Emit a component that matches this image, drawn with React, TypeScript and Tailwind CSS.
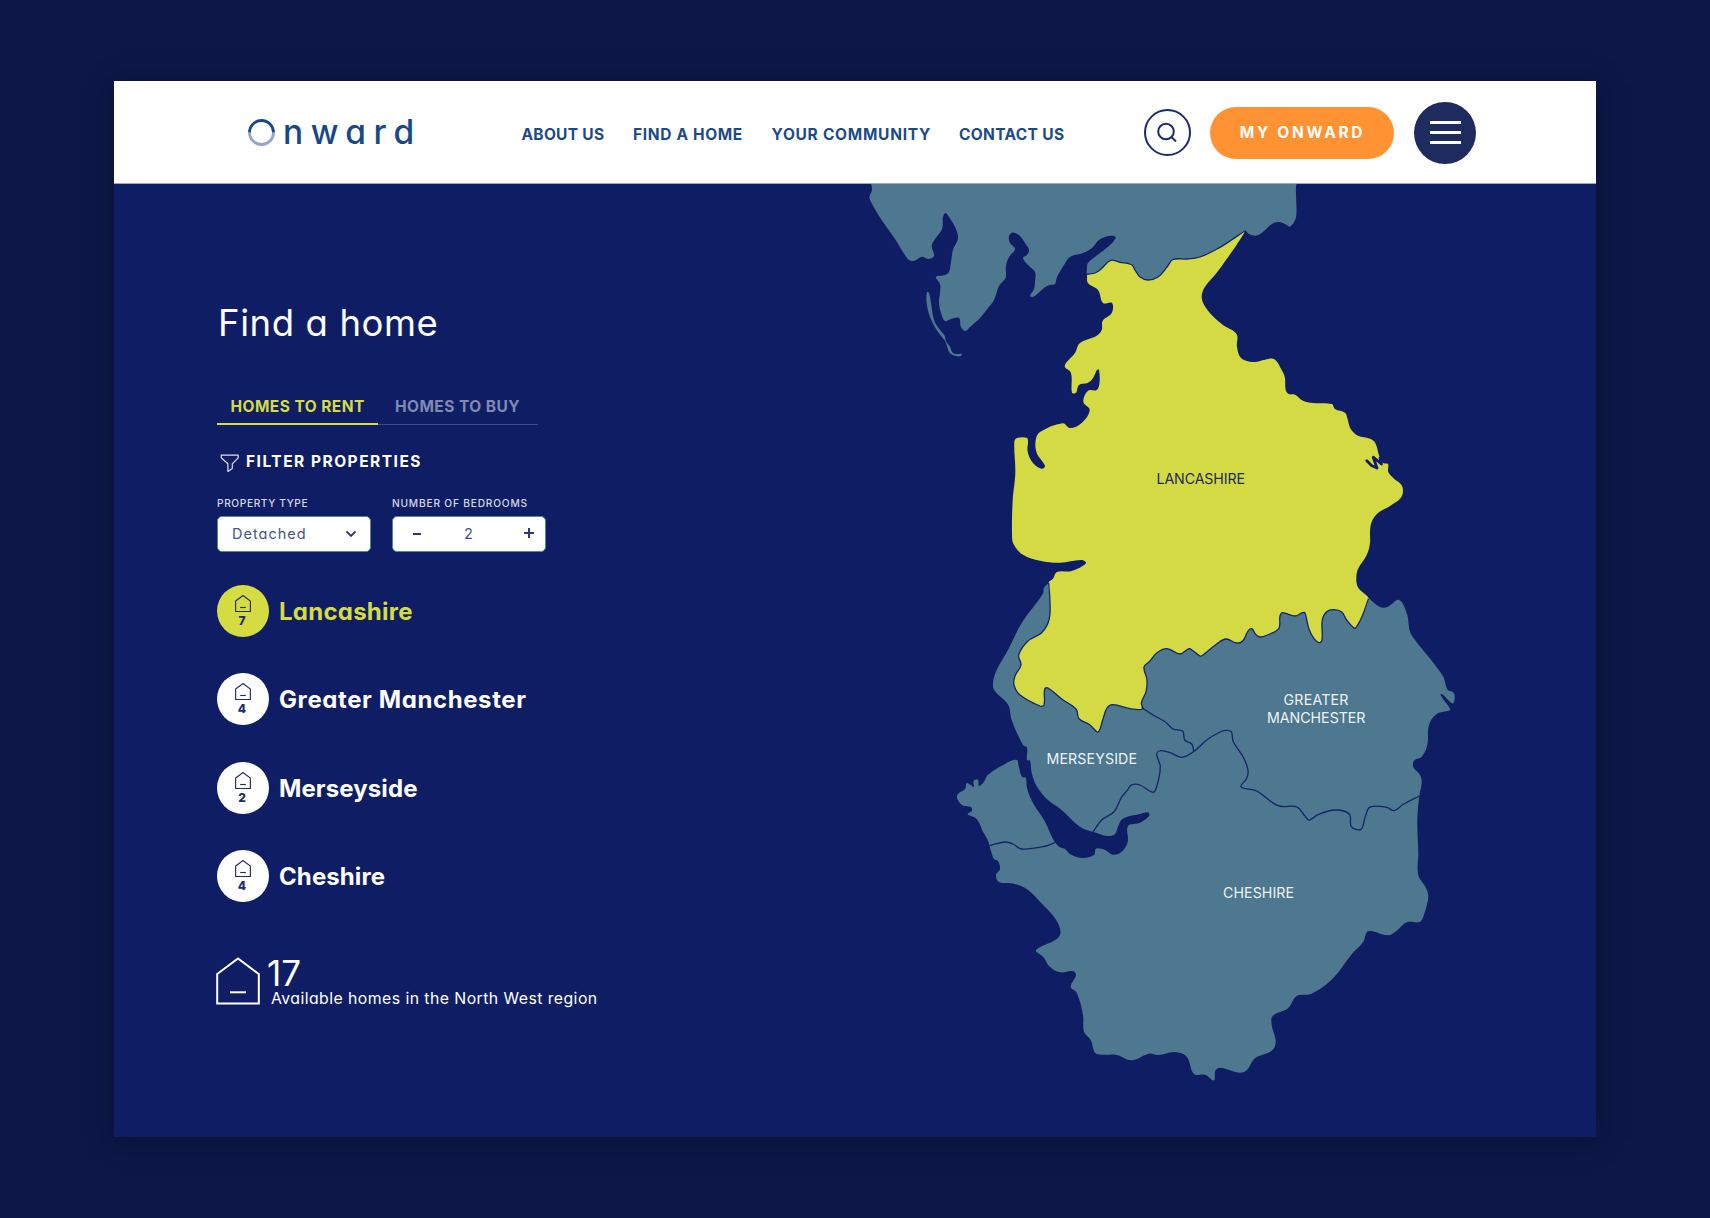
import React from "react";

type Point = [number, number];

/** Turns a flat "x,y x,y" list into points. */
function parse(list: string): Point[] {
  return list
    .trim()
    .split(/\s+/)
    .map((pair) => pair.split(",").map(Number) as Point);
}

/** Smooth curve through every point, with handles limited by segment length. */
function curve(list: string, closed = true): string {
  const p = parse(list);
  const n = p.length;
  const at = (i: number): Point => (closed ? p[(i + n) % n] : p[Math.max(0, Math.min(n - 1, i))]);
  const handle = (i: number, dir: 1 | -1): Point => {
    const a = at(i - 1);
    const b = at(i);
    const c = at(i + 1);
    const d1 = Math.hypot(b[0] - a[0], b[1] - a[1]);
    const d2 = Math.hypot(c[0] - b[0], c[1] - b[1]);
    const len = dir === 1 ? d2 : d1;
    const k = (dir * 0.37 * len) / (d1 + d2 || 1);
    return [b[0] + (c[0] - a[0]) * k, b[1] + (c[1] - a[1]) * k];
  };
  const f = (q: Point) => `${q[0].toFixed(1)} ${q[1].toFixed(1)}`;
  let d = `M${f(p[0])}`;
  const last = closed ? n : n - 1;
  for (let i = 0; i < last; i++) {
    d += `C${f(handle(i, 1))} ${f(handle(i + 1, -1))} ${f(at(i + 1))}`;
  }
  return closed ? d + "Z" : d;
}

const CUMBRIA = `872,176 872,190 869.5,197 871,202 881,219 895,239 907,258 911.5,261 916,260 922,256.8 928,259 934,256
 931.7,246 935,239 942,229 943,217 945.5,213 949,217 955,227 958,238 953,250 951,262 949,272 945,275 936,277 940,284
 940,293 939,302 941,313 945,321 951,319 959,318 961,327 965.5,331 970,327 980,318 988,308 994,300 999,286 1005,279
 1006,276 1006,266 1009,257 1015,249 1010,243 1009,236 1013,232.5 1020,236 1025,243 1029,250 1027,255 1023,258
 1029,266 1035,272 1035,282 1034,289 1030,296 1034,296.5 1044,288 1050,285 1055,284 1057,277 1064,265 1070,257
 1083,253 1092,248 1099,240 1109,236 1115.5,237 1113,242 1104,250 1096,256 1088,263 1087,268 1087,274 1092,280
 1110,275 1130,285 1160,285 1185,270 1215,256 1236,240 1245,230.5 1249,234 1257,235.5 1264,231 1272,224 1279,222 1285,224 1290,226.5
 1295.5,219 1296.5,210 1296,195 1296,187 1296.5,176`;

const WALNEY = `927,292 929,293 931,303 934,320 940,330 944.7,336 946,341.3 950,346.7 952.7,352.7 957.3,354 961.5,353.8
 961,356 956,356 950,353.3 946,343.3 945,340.7 936.7,330 930,316.7 926.7,303.3`;

const LANCS_SOUTH = `1368.5,598.7 1362.7,615 1356.7,626.7 1354,628 1346.7,620 1341.7,612 1334,609.7 1326.7,611.7 1322.3,620 1322,640
 1319,642.7 1314,638.7 1309,629 1305,613 1302.7,612.7 1295,616 1282.7,612.7 1280,616 1279,628 1270,634 1260,637
 1256,634.7 1251.7,628.7 1248,631 1243,640.7 1236.7,643 1226,639 1216.7,644 1203,655 1200,656 1193,650.7 1189,648.7
 1180,654 1167,648.7 1156.7,653 1150,661 1144,667 1147,680 1146,691.7 1141.3,703 1142.7,709 1130,708.7 1113,704.7
 1107,708 1102.7,720 1098,732 1090,725 1079,718.7 1076,709 1061.7,699 1048,688 1044.7,689 1044,705 1040,706
 1020,695 1014,685 1015,676 1021,665 1018.7,655 1028,641 1041.7,632.7 1049,620 1050,603 1048.7,582.7`;

const LANCS_WEST = `1053,578.7 1057,572 1071.7,571 1086,563.3 1081.7,560 1060,562.7 1040,560.7 1023,554.7 1013.5,544 1012,533
 1012.7,500 1015.3,473 1014.3,441.7 1017,438 1026.7,437.7 1028,441 1027.7,451.7 1033,463 1041.7,468.7 1045,466
 1036.7,452.7 1035.7,440 1040,432 1062.7,423.2 1070,428 1081.7,423 1089.7,410 1083.3,401.7 1088,390.7 1096.7,390
 1099.5,383 1099,370 1097,370 1093,378 1088,382.7 1079,385 1076,392.7 1072,392.7 1071,373 1064.7,366 1075,353
 1080,343 1096.7,335.7 1101.7,330 1102.7,320.7 1111.7,313 1112,303 1103,303 1098,290 1088,283 1087,274.5`;

const LANCS_NORTH = `1087,274.3 1095,273 1101,269 1110.7,260.3 1120,262.3 1131.7,264.7 1135,270 1140,277 1148,280 1158,277 1167,267
 1173,259.5 1187,259 1200,257 1217,249 1230,241 1244.5,231`;

const LANCS_EAST = `1236.7,244.7 1226.7,259 1216.7,272.7 1205,286.7 1201.7,296 1204,304.7 1211.7,315 1223,325 1236.5,334
 1237,346.7 1240,356.7 1246.7,361 1255,362 1265,359.7 1273,358.7 1277,361.7 1280,367 1284.7,376.7 1285.7,390
 1288.7,394 1295,394.7 1303,400.7 1313,403 1331.7,404 1335,409 1345,412.7 1347.3,418 1350.7,429 1358,435.7
 1370,438.7 1375.3,443 1379.5,457 1383,463 1388,464 1388.3,472 1394,478.7 1400.7,484 1403,490 1400.7,498
 1390,506 1378,513 1371.7,521.7 1370,531.7 1370,543 1366.7,555 1358,569 1356.3,578 1357.7,586.7 1363,592.7`;

const SOUTH = `1046.7,584.7 1044,588 1042.7,594 1021.7,623 1008,650 996.7,670 993,683 994.7,690.7 1008,704.5 1011.7,720
 1023,745 1027,747.7 1027,760 1030,760.7 1031.7,773 1037,786.7 1048,800 1061.7,810 1080,826.7 1096.7,833 1108,836
 1115,834 1118,826.7 1122.7,818.7 1140,814 1148,812.3 1149,816 1140,822.7 1128,826 1127.7,841.7 1121.7,851.7
 1113,854.7 1105,850 1096,848.7 1094,855 1081.7,858 1070,854 1065,849 1059,846.7 1053,839 1045,821.7 1033,803
 1027,788 1025.7,777.7 1022,777 1018.7,766 1017,760 1010,761.3 988,774.7 984,781.7 979,786 978,780 973.7,780.7
 973.7,787 970.7,785 966.7,783 965,789 958,794 957,798 962.7,805.5 970.7,807 972,810.7 967.7,814 976.7,819
 983,831.7 988,840.7 990.7,850 994,859 998,861 1000,869 996,875 999,882 1015,884 1028,890 1040,901.7 1055,918.3
 1060.5,931.7 1056.7,939 1036,950.2 1043.3,957 1050,967 1060,972.3 1073,971 1076,975 1070.7,987 1076.7,992.7
 1083,1015 1084,1031.7 1090.7,1040 1095,1052.7 1101.7,1054.7 1116.7,1055 1131.7,1060.3 1149,1053.7 1158,1055
 1175,1052 1186.7,1056.7 1194,1074 1205,1074.7 1214,1080.3 1215.3,1070.7 1220,1067.7 1240,1072.7 1247,1070
 1255,1058.3 1271.7,1050.7 1275.7,1041.7 1271.7,1025 1272.7,1016 1288,1008.3 1296.7,996 1311.7,993.7 1333,978.3
 1351.7,954.3 1363,942.3 1368.3,931.3 1388,935.3 1396.7,930.7 1406.7,922.3 1420,921.7 1424.5,913 1428.3,896.7
 1426,888 1418.3,875 1418.3,853 1417.3,820 1419.3,796 1421.7,783 1420,775 1413.3,767 1414,760.7 1421.7,756.7
 1427.3,745 1429,725 1436.7,714 1450,710 1449,707 1440.5,695 1442,694 1452.7,703.5 1454.7,696.7 1452.7,692 1447.7,690
 1442.3,675 1415,640 1410,631.7 1406.7,613 1399,600 1388,606.7 1380,607 1370,599.3 1368,597 1362,592 1340,590
 1060,585 1053,580`;

const MERSEY_MANCHESTER = `1141.5,707.5 1153,715 1165,721.7 1173,729 1182.7,731 1184.7,740 1191.7,744 1193.7,751`;

const CHESHIRE_NORTH = `1093,832 1101.7,820 1114,811.7 1121.7,797 1127,790.7 1131.7,784.9 1140,785 1153,792.3 1156.7,786.7
 1160.3,767 1156.7,754 1160.7,750.7 1170,752.7 1181.7,757.3 1194,751.3 1206.7,740 1220,732 1226,730.3 1231.3,731.7
 1233.3,741.7 1243.3,757.3 1248,770 1246.7,778.3 1241,786.9 1256.7,791 1278,805.7 1296.7,806.9 1305,816 1309,820.2
 1318,814.7 1335,810 1349.3,814 1351,826 1356.7,829.7 1361.7,828.7 1365.3,816.7 1370,807.2 1386.7,807.3 1394,810.7
 1403,804.5 1419.3,796`;

const WIRRAL = `989.3,845.7 1005,842 1013,844 1021.7,849 1046,846 1055.7,842`;

const LANCASHIRE = [LANCS_SOUTH, LANCS_WEST, LANCS_NORTH, LANCS_EAST].join(" ");

type MapLabel = { text: string; x: number; y: number; width: number; dark?: boolean };

const LABELS: MapLabel[] = [
  { text: "LANCASHIRE", x: 1156.5, y: 484, width: 88.5, dark: true },
  { text: "GREATER", x: 1283.5, y: 705, width: 65 },
  { text: "MANCHESTER", x: 1267, y: 723, width: 98.5 },
  { text: "MERSEYSIDE", x: 1046.5, y: 764, width: 90.5 },
  { text: "CHESHIRE", x: 1223, y: 898, width: 71 },
];

function RegionMap() {
  return (
    <svg width="620" height="953" viewBox="850 184 620 953" className="shrink-0" aria-label="North West map">
      <g fill="#4d788f">
        <path d={curve(CUMBRIA)} />
        <path d={curve(WALNEY)} />
        <path d={curve(SOUTH)} />
      </g>
      <path d={curve(LANCASHIRE)} fill="#d4da43" />
      <g fill="none" stroke="#142468" strokeWidth="1.3" strokeLinejoin="round">
        <path d={curve(LANCS_NORTH, false)} />
        <path d={curve(LANCS_SOUTH, false)} />
        <path d={curve(MERSEY_MANCHESTER, false)} />
        <path d={curve(CHESHIRE_NORTH, false)} />
        <path d={curve(WIRRAL, false)} />
      </g>
      <path
        d="M1366.800 460.800L1371.500 465.500L1377 468L1373.200 457.200L1381.500 464L1380 458"
        fill="none"
        stroke="#0f1e64"
        strokeWidth="2.8"
        strokeLinecap="round"
        strokeLinejoin="round"
      />
      <g fontFamily="Inter, sans-serif" fontSize="14.2">
        {LABELS.map((l) => (
          <text
            key={l.text}
            x={l.x}
            y={l.y}
            textLength={l.width}
            fill={l.dark ? "#1d2b5f" : "#eef3f6"}
          >
            {l.text}
          </text>
        ))}
      </g>
    </svg>
  );
}

function House({ size, stroke }: { size: "sm" | "lg"; stroke: number }) {
  return (
    <svg
      viewBox="0 0 44 48"
      className={size === "sm" ? "h-[17px] w-4" : "h-12 w-11 shrink-0"}
      fill="none"
      stroke="currentColor"
      strokeWidth={stroke}
    >
      <path d="M1.200 17 22 1.400 42.800 17v29.600H1.200z" />
      <path d="M14 35.300h16" />
    </svg>
  );
}

const NAV = [
  { label: "ABOUT US", style: "w-[83px] tracking-[0.28px]" },
  { label: "FIND A HOME", style: "w-[110px] tracking-[0.65px]" },
  { label: "YOUR COMMUNITY", style: "w-[159px] tracking-[0.72px]" },
  { label: "CONTACT US", style: "w-[105px] tracking-[0.34px]" },
];

function Header() {
  return (
    <header className="flex h-[103px] items-center border-b border-[#9aa8c0] bg-white pt-px pl-[134px]">
      <div className="flex w-[273.5px] items-center text-[#17488a]">
        <svg width="27" height="27" viewBox="0 0 27 27" fill="none" strokeWidth="2.8">
          <path d="M1.500 13.500a12 12 0 0 0 24 0" stroke="#94a6c8" />
          <path d="M1.500 13.500a12 12 0 0 1 24 0" stroke="#17488a" />
        </svg>
        <span className="-mt-[2px] ml-[8px] text-[33.5px] leading-[40px] font-medium tracking-[7.5px]">nward</span>
      </div>
      <nav className="flex gap-[28.5px] pt-[4px] text-[15.500px] leading-5 font-bold whitespace-nowrap text-[#1d4a87]">
        {NAV.map((n) => (
          <a key={n.label} className={n.style}>
            {n.label}
          </a>
        ))}
      </nav>
      <div className="ml-[80px] flex items-center">
        <button className="flex size-[47px] items-center justify-center rounded-full border-2 border-[#1f2b6c]">
          <svg width="22" height="22" viewBox="0 0 22 22" fill="none" stroke="#1f2b6c" strokeWidth="2" className="-translate-x-px">
            <circle cx="10" cy="9.500" r="7.800" />
            <path d="m15 14.500 5 5" />
          </svg>
        </button>
        <button className="ml-[19px] h-[52px] w-[184px] rounded-full bg-[#ff9232] pt-px pl-px text-[15.500px] font-bold tracking-[2.7px] whitespace-nowrap text-white">
          MY ONWARD
        </button>
        <button className="ml-5 flex size-[62px] flex-col items-center justify-center gap-[7px] rounded-full bg-[#1d2b5f]">
          <i className="h-[3px] w-[31px] bg-white" />
          <i className="h-[3px] w-[31px] bg-white" />
          <i className="h-[3px] w-[31px] bg-white" />
        </button>
      </div>
    </header>
  );
}

const REGIONS = [
  { name: "Lancashire", count: 7, active: true, spacing: "tracking-[0.25px]" },
  { name: "Greater Manchester", count: 4, active: false, spacing: "tracking-[0.6px]" },
  { name: "Merseyside", count: 2, active: false, spacing: "tracking-[0.1px]" },
  { name: "Cheshire", count: 4, active: false, spacing: "tracking-[0.1px]" },
];

function Sidebar() {
  return (
    <section className="w-[736px] shrink-0 pt-[115px] pl-[103px] text-white">
      <h1 className="pl-px text-[36.500px] leading-[48px] tracking-[0.6px]">Find a home</h1>

      <div className="mt-[50px] flex w-[321px] text-[15.500px] leading-5 font-bold tracking-[0.45px] whitespace-nowrap">
        <div className="w-[161px] border-b-2 border-[#d4dc42] pb-[6px] pl-[13.500px] text-[#d4dc42]">HOMES TO RENT</div>
        <div className="w-[160px] border-b border-[#3d4a86] pb-[7px] pl-[17px] text-[#8189b3]">HOMES TO BUY</div>
      </div>

      <div className="mt-[27px] flex h-5 items-center pl-[3px]">
        <svg width="20" height="19" viewBox="0 0 20 19" className="mt-[2px]" fill="none" stroke="#dfe2ee" strokeWidth="1.200">
          <path d="M1.200 1.200h17v2.600l-5.900 6v4.600l-4.400 3V9.800l-6.700-6z" strokeLinejoin="round" />
        </svg>
        <h2 className="ml-[6px] text-[15.500px] leading-5 font-bold tracking-[1.5px]">FILTER PROPERTIES</h2>
      </div>

      <div className="mt-[25px] flex gap-[21px]">
        <div className="w-[154px]">
          <div className="text-[10.2px] leading-3 font-medium tracking-[0.6px] whitespace-nowrap text-[#d5d9e8]">PROPERTY TYPE</div>
          <div className="mt-[7px] flex h-9 items-center justify-between rounded-[5px] border border-[#5b8299] bg-white pr-[13px] pl-[14px] text-[14.500px] tracking-[1px] text-[#46538a]">
            Detached
            <svg width="12" height="8" viewBox="0 0 12 8" fill="none" stroke="#2b3977" strokeWidth="1.900">
              <path d="m1.500 1.300 4.500 4.700 4.500-4.700" />
            </svg>
          </div>
        </div>
        <div className="w-[154px]">
          <div className="text-[10.2px] leading-3 font-medium tracking-[0.8px] whitespace-nowrap text-[#d5d9e8]">NUMBER OF BEDROOMS</div>
          <div className="mt-[7px] flex h-9 items-center rounded-[5px] border border-[#5b8299] bg-white pr-[11px] pl-5 text-[14.500px] text-[#46538a]">
            <i className="-mt-px h-[2px] w-2 bg-[#2b3977]" />
            <span className="ml-[43px]">2</span>
            <svg width="10" height="10" viewBox="0 0 10 10" stroke="#2b3977" strokeWidth="2" className="-mt-[2px] ml-auto">
              <path d="M0 5h10M5 0v10" />
            </svg>
          </div>
        </div>
      </div>

      <ul className="mt-[33px] flex flex-col gap-[36.300px]">
        {REGIONS.map((r) => (
          <li key={r.name} className={r.active ? "flex h-[52px] items-center text-[#d4dc42]" : "flex h-[52px] items-center"}>
            <span
              className={
                r.active
                  ? "flex size-[52px] flex-col items-center rounded-full bg-[#d4dc42] pt-[10px] text-[#1f2b5f]"
                  : "flex size-[52px] flex-col items-center rounded-full bg-white pt-[10px] text-[#1f2b6c]"
              }
            >
              <House size="sm" stroke={3.2} />
              <b className="mt-px mr-[2px] text-[12px] leading-4 font-extrabold">{r.count}</b>
            </span>
            <span className={`ml-[10px] pt-[2px] text-[24px] leading-8 font-bold ${r.spacing}`}>{r.name}</span>
          </li>
        ))}
      </ul>

      <div className="mt-[55px] -ml-px flex">
        <House size="lg" stroke={2} />
        <div className="ml-[7px]">
          <div className="mt-[2px] text-[35px] leading-[28px]">17</div>
          <p className="mt-[2px] ml-1 text-[15.8px] leading-5 tracking-[0.45px]">Available homes in the North West region</p>
        </div>
      </div>
    </section>
  );
}

export default function App() {
  return (
    <div className="h-[1218px] w-[1710px] overflow-hidden bg-[#0d1847] pt-[81px] pl-[114px] font-['Inter',sans-serif] [font-feature-settings:'cv11']">
      <div className="h-[1056px] w-[1482px] bg-[#0f1e64] shadow-[0_4px_24px_rgba(8,12,40,0.5)]">
        <Header />
        <main className="flex">
          <Sidebar />
          <RegionMap />
        </main>
      </div>
    </div>
  );
}
